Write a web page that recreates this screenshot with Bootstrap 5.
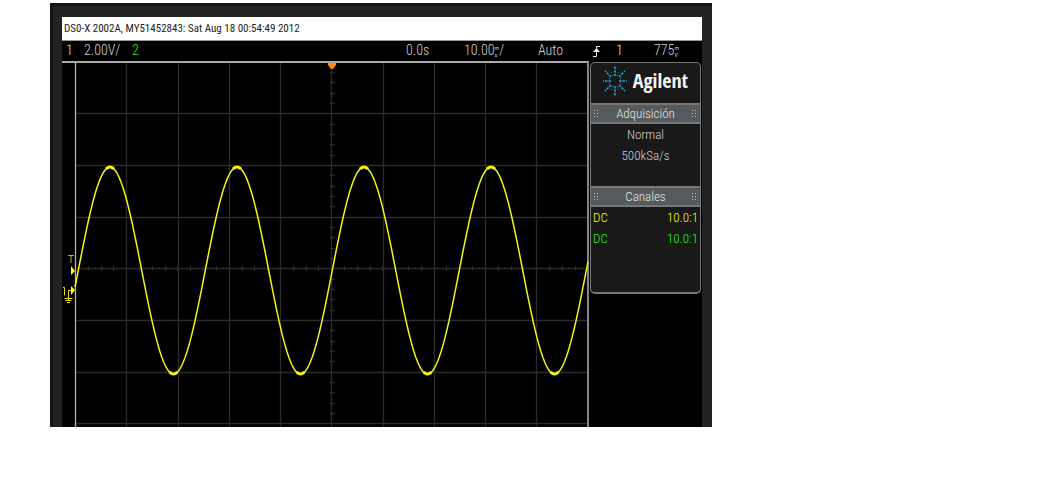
<!DOCTYPE html>
<html lang="es">
<head>
<meta charset="utf-8">
<meta name="viewport" content="width=device-width, initial-scale=1">
<title>DSO-X 2002A</title>
<link href="https://cdn.jsdelivr.net/npm/bootstrap@5.3.0/dist/css/bootstrap.min.css" rel="stylesheet">
<style>
body { background: #fff; font-family: "Roboto Condensed", "Liberation Sans", sans-serif; font-size: 14px; line-height: 20px; }
.scope { max-width: 662px; margin: 3px 0 0 50px; padding: 14px 10px 0 9px; background: #222; border-left: 3px solid #141414; box-shadow: inset 0 3px #141414; }
.screen { background: #000; color: #d4d4d4; }
.title-bar { background: #fff; color: #222; height: 24px; padding: 2px; font-size: 11px; border-bottom: 1px solid #999; }
.status-bar { display: grid; grid-template-columns: 18fr 48fr 274fr 58fr 74fr 55fr 23fr 38fr 48fr; height: 20px; padding-left: 4px; line-height: 18px; font-weight: 300; }
.status-bar > span { min-width: 0; }
.unit { display: inline-grid; font-size: 6px; line-height: 7px; vertical-align: 5px; font-weight: 400; }
.ch1 { color: #ffff00; }
.ch2 { color: #26f812; }
.plot-area { flex: 528 1 0; min-width: 0; }
.side { flex: 112 1 0; min-width: 0; }
.info { background: #191919; border: 1px solid #777; border-bottom-width: 2px; border-radius: 5px; height: 232px; margin: 1px 1px 0 0; font-weight: 300; }
.brand { height: 40px; color: #f4f4f4; font-family: "Open Sans Condensed", "Roboto Condensed", sans-serif; font-size: 20px; padding: 0 12px 4px 11px; }
.section-head { background: #555a5e; border-top: 2px solid #777; border-bottom: 2px solid #777; height: 21px; line-height: 17px; margin: 0; font-size: 13px; font-weight: 300; padding: 0 3px; color: #e8e8e8; }
.section-body { height: 62px; line-height: 21px; font-size: 13px; }
.section-body.channels { padding: 0 2px; }
</style>
</head>
<body>
<main class="scope">
  <div class="screen">
    <header class="title-bar text-nowrap overflow-hidden">DS0-X 2002A, MY51452843: Sat Aug 18 00:54:49 2012</header>
    <div class="status-bar text-nowrap">
      <span class="ch1">1</span><span>2.00V/</span><span class="ch2">2</span><span>0.0s</span>
      <span>10.00<span class="unit"><span>m</span><span>s</span></span>/</span><span>Auto</span>
      <span><svg width="8" height="14" viewBox="0 0 8 14" fill="none" stroke="#eee"><path d="M0 12.500H3.500V2.500H7"/><path d="M0 8L3.500 4L7 8Z" fill="#eee" stroke="none"/></svg></span>
      <span class="ch1">1</span><span>775<span class="unit"><span>m</span><span>V</span></span></span>
    </div>
    <div class="d-flex align-items-start">
      <div class="plot-area">
        <svg class="d-block w-100" viewBox="0 61 528 366" role="img" aria-label="Canal 1">
          <g id="grid" stroke="#2b2b2b" stroke-width="1.300" fill="none"></g>
          <path d="M0 62H527" stroke="#aaa6aa" stroke-width="2"/>
          <path d="M13.500 62V427" stroke="#b4b0b4" stroke-width="1.300"/>
          <path d="M526 62V427" stroke="#858585" stroke-width="2"/>
          <path d="M266 63h8v2l-3 4h-2l-3-4z" fill="#ff8a10"/>
          <path id="wave" fill="none" stroke="#f4f410" stroke-width="1.500"/>
          <path id="crests" fill="none" stroke="#f4f410" stroke-width="3"/>
          <g fill="none" stroke="#e6e600">
            <path d="M6 255.500h6M9 255v8" stroke="#b8b820"/>
            <path d="M9 266l4 5l-4 4z" fill="#ff0" stroke="none"/>
            <path d="M1 287.500h1.500v8M6.500 301v-10.500h4M2.500 298.500h8M3.500 300.500h6M5 302.500h3"/>
            <path d="M9 286l4 4l-4 5z" fill="#ff0" stroke="none"/>
          </g>
        </svg>
      </div>
      <aside class="side">
        <div class="info">
          <div class="brand d-flex align-items-center justify-content-between fw-bold">
            <svg class="flex-shrink-0" width="26" height="30" viewBox="-13 -15 26 30" fill="none" stroke="#20a9d2" stroke-width="1.500">
              <path d="M0-5V-15M0 5V15M4 0H12M-4 0H-12M4-4L10-10M-4-4L-10-10M4 4L10 10M-4 4L-10 10" stroke-dasharray="2.500 1"/>
              <path d="M2-5L4-9M-2-5L-4-9M2 5L4 9M-2 5L-4 9M5-2L8-3.500M-5-2L-8-3.500M5 2L8 3.500M-5 2L-8 3.500" stroke-width="1" stroke-dasharray="1.500 2" opacity=".8"/>
            </svg>
            <span>Agilent</span>
          </div>
          <h2 class="section-head d-flex align-items-center justify-content-between"><svg width="5" height="8" stroke="#bbb" stroke-dasharray="1 2"><path d="M.5 0V8M3.500 0V8"/></svg><span>Adquisición</span><svg width="5" height="8" stroke="#bbb" stroke-dasharray="1 2"><path d="M.5 0V8M3.500 0V8"/></svg></h2>
          <div class="section-body text-center"><div>Normal</div><div>500kSa/s</div></div>
          <h2 class="section-head d-flex align-items-center justify-content-between"><svg width="5" height="8" stroke="#bbb" stroke-dasharray="1 2"><path d="M.5 0V8M3.500 0V8"/></svg><span>Canales</span><svg width="5" height="8" stroke="#bbb" stroke-dasharray="1 2"><path d="M.5 0V8M3.500 0V8"/></svg></h2>
          <div class="section-body channels">
            <div class="d-flex justify-content-between ch1"><span>DC</span><span>10.0:1</span></div>
            <div class="d-flex justify-content-between ch2"><span>DC</span><span>10.0:1</span></div>
          </div>
        </div>
      </aside>
    </div>
  </div>
</main>
<script src="https://cdn.jsdelivr.net/npm/bootstrap@5.3.0/dist/js/bootstrap.bundle.min.js"></script>
<script>
// Graticule: ten columns, rows every 51.7 units, fine ticks on both centre axes
let lines = '';
for (let i = 1; i < 10; i++) lines += `M${Math.round(13 + i * 51.25) + .5} 63V427`;
for (let i = 1; i < 8; i++) lines += `M14 ${Math.round(61.5 + i * 51.7) + .5}H525`;
for (let i = 1; i < 40; i++) lines += `M${Math.round(13 + i * 12.81) + .5} 266V271`;
for (let i = 1; i < 36; i++) lines += `M268 ${Math.round(61.5 + i * 10.34) + .5}H273`;
document.getElementById('grid').innerHTML = `<path d="${lines}"/>`;
// Channel 1 sine
const level = x => 270.5 - 103.5 * Math.cos(2 * Math.PI * (x - 48) / 127);
let wave = '', crests = '';
for (let x = 13; x <= 526; x++) wave += (x > 13 ? 'L' : 'M') + x + ' ' + level(x).toFixed(1);
for (let c = 48; c < 526; c += 63.5)
  for (let d = -4; d <= 4; d++) crests += (d > -4 ? 'L' : 'M') + (c + d) + ' ' + level(c + d).toFixed(1);
document.getElementById('wave').setAttribute('d', wave);
document.getElementById('crests').setAttribute('d', crests);
</script>
</body>
</html>
